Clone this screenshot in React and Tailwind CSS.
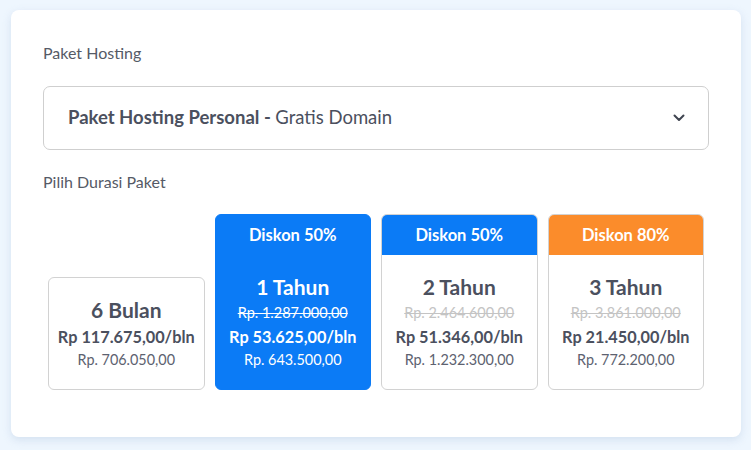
import React from 'react';

const plans = [
  { title: '6 Bulan', price: 'Rp 117.675,00/bln', total: 'Rp. 706.050,00' },
  { title: '1 Tahun', badge: 'Diskon 50%', old: 'Rp. 1.287.000,00', price: 'Rp 53.625,00/bln', total: 'Rp. 643.500,00', active: true },
  { title: '2 Tahun', badge: 'Diskon 50%', badgeClass: 'bg-[#0b7bf6]', old: 'Rp. 2.464.600,00', price: 'Rp 51.346,00/bln', total: 'Rp. 1.232.300,00' },
  { title: '3 Tahun', badge: 'Diskon 80%', badgeClass: 'bg-[#fb8c2b]', old: 'Rp. 3.861.000,00', price: 'Rp 21.450,00/bln', total: 'Rp. 772.200,00' },
];

function PlanCard({ plan }) {
  const dark = plan.active;
  return (
    <div
      className={
        'flex-1 rounded-[6px] border overflow-hidden ' +
        (dark ? 'bg-[#0b7bf6] border-[#0b7bf6] text-white' : 'bg-white border-[#d2d2d2] text-[#4b505e]')
      }
    >
      {plan.badge && (
        <div className={'h-[40px] flex items-center justify-center text-[16.5px] font-bold text-white ' + (plan.badgeClass || '')}>
          {plan.badge}
        </div>
      )}
      <div className="pt-[18px] pb-[18px] text-center">
        <div className="text-[21px] leading-[28px] font-bold">{plan.title}</div>
        {plan.old && (
          <div className={'text-[14.5px] leading-[23px] line-through ' + (dark ? 'text-white' : 'text-[#c4c4c4]')}>
            {plan.old}
          </div>
        )}
        <div className="text-[16.3px] leading-[25px] font-bold">{plan.price}</div>
        <div className={'text-[14.4px] leading-[22px] ' + (dark ? 'text-white' : 'text-[#5d6270]')}>{plan.total}</div>
      </div>
    </div>
  );
}

export default function App() {
  return (
    <div className="min-h-[450px] bg-[#eef6fe] pt-[10px] pl-[11px] pr-[10px] pb-[14px]" style={{ fontFamily: 'Lato, "Noto Sans", sans-serif' }}>
      <div className="bg-white rounded-[8px] shadow-[0_3px_8px_rgba(180,200,225,0.45)] pt-[33px] pb-[47px] px-[32px]">
        <div className="text-[16px] leading-[20px] text-[#555a66]">Paket Hosting</div>
        <div className="mt-[23px] h-[64px] border border-[#cfcfcf] rounded-[7px] flex items-center justify-between pl-[24px] pr-[22px]">
          <div className="text-[18.5px] text-[#4b505e]">
            <span className="font-bold">Paket Hosting Personal - </span>
            <span>Gratis Domain</span>
          </div>
          <svg width="14" height="14" viewBox="0 0 14 14" fill="none">
            <path d="M2.5 4.5 L7 9 L11.5 4.5" stroke="#3f4450" strokeWidth="2" strokeLinecap="round" strokeLinejoin="round" />
          </svg>
        </div>
        <div className="mt-[22px] text-[16px] leading-[20px] text-[#555a66]">Pilih Durasi Paket</div>
        <div className="mt-[22px] flex items-end gap-[10px] px-[5px]">
          {plans.map((p) => (
            <PlanCard key={p.title} plan={p} />
          ))}
        </div>
      </div>
    </div>
  );
}
